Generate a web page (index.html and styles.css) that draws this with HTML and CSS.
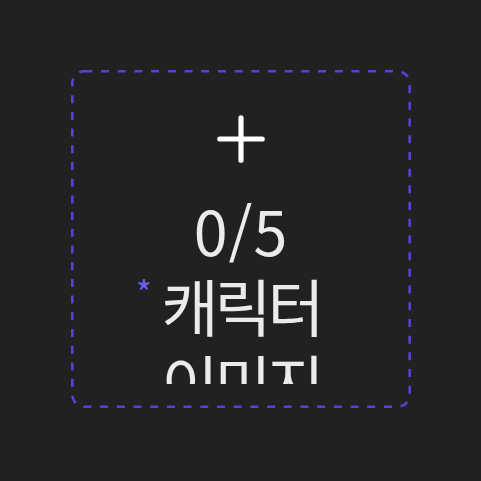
FILE: index.html
```html
<!DOCTYPE html>
<html lang="ko">
<head>
<meta charset="utf-8">
<link rel="stylesheet" href="styles.css">
</head>
<body>
<div class="upload">
  <svg class="frame" width="340" height="338" viewBox="0 0 340 338" aria-hidden="true">
    <rect x="1.3" y="1.3" width="337.4" height="335.4" rx="12" ry="12" fill="none" stroke="#5a3fda" stroke-width="2.6" stroke-dasharray="8 8.7"/>
  </svg>
  <div class="content">
    <svg class="plus" width="48" height="48" viewBox="0 0 48 48" aria-hidden="true">
      <path d="M24 2.8V45.2M2.8 24H45.2" stroke="#ffffff" stroke-width="5.2" stroke-linecap="round" fill="none"/>
    </svg>
    <div class="count">0/5</div>
    <div class="label"><span class="req">*</span>캐릭터 이미지</div>
  </div>
</div>
</body>
</html>
```
FILE: styles.css
```css
html, body {
  margin: 0;
  padding: 0;
  background: #212121;
}
body {
  height: 481px;
  display: flex;
  align-items: center;
  justify-content: center;
  font-family: "Noto Sans CJK KR", "Noto Sans", sans-serif;
}
.upload {
  position: relative;
  width: 340px;
  height: 338px;
  box-sizing: border-box;
  padding: 45px 10px 24px;
  display: flex;
  flex-direction: column;
  margin-left: 1px;
  margin-top: -3px;
}
.frame {
  position: absolute;
  left: 0;
  top: 0;
}
.content {
  flex: 1;
  min-height: 0;
  overflow: hidden;
  display: flex;
  flex-direction: column;
  align-items: center;
  color: #ebebeb;
  font-weight: 400;
}
.plus {
  display: block;
  flex: none;
}
.count {
  font-size: 61px;
  line-height: 75px;
  margin-top: 29px;
  letter-spacing: 1px;
}
.label {
  position: relative;
  width: 180px;
  text-align: center;
  font-size: 62px;
  line-height: 76px;
  letter-spacing: -4px;
  margin-top: 0;
}
.req {
  position: absolute;
  left: -15px;
  top: -13px;
  font-size: 34px;
  color: #6d62f0;
  letter-spacing: 0;
}
```
